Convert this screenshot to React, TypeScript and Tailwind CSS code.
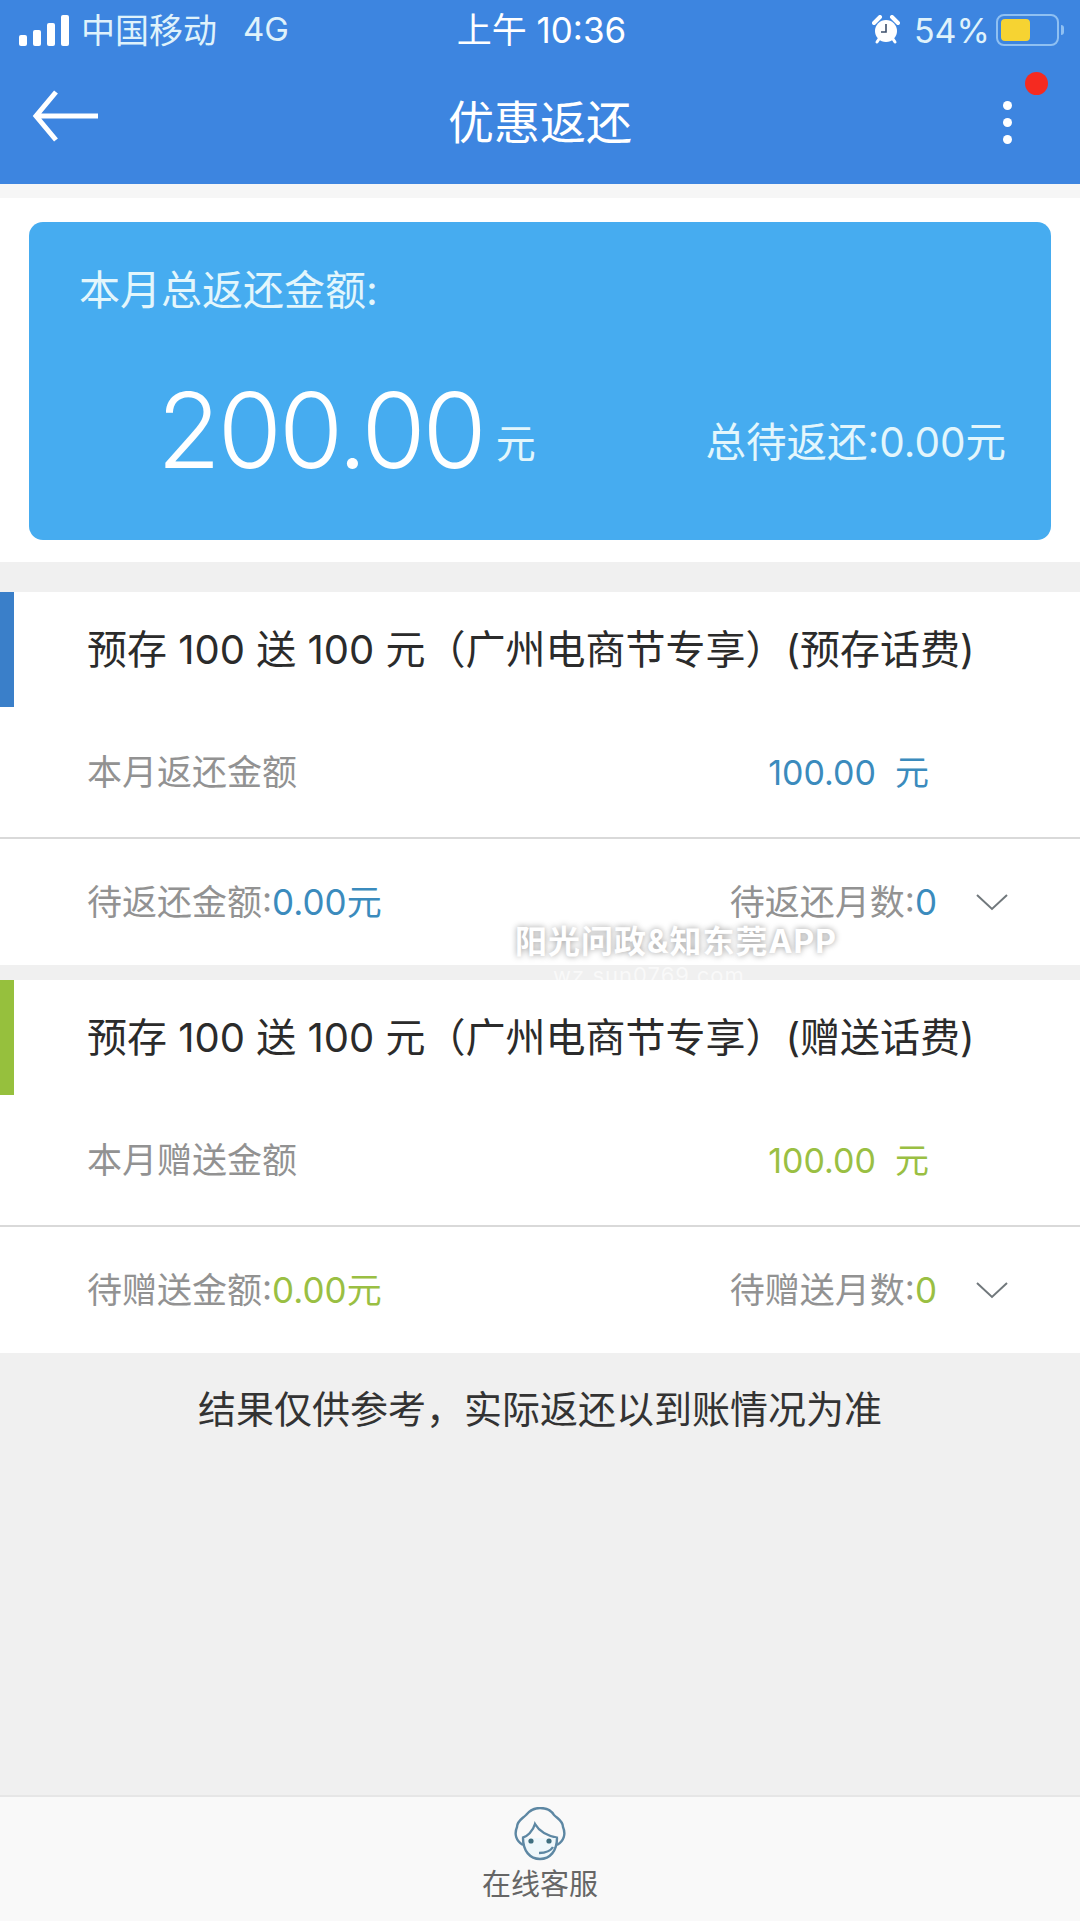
const font = { fontFamily: '"Inter", "Noto Sans CJK SC", sans-serif' };

function Signal() {
  return (
    <div className="flex items-end gap-[6px]">
      <div className="h-[11px] w-[8px] rounded-[2px] bg-white" />
      <div className="h-[16px] w-[8px] rounded-[2px] bg-white" />
      <div className="h-[23px] w-[8px] rounded-[2px] bg-white" />
      <div className="h-[31px] w-[8px] rounded-[2px] bg-white" />
    </div>
  );
}

function Alarm() {
  return (
    <svg width="28" height="30" viewBox="0 0 28 30">
      <circle cx="14" cy="16" r="11" fill="#fff" />
      <path d="M2 8 L8 2 M26 8 L20 2" stroke="#fff" strokeWidth="4" strokeLinecap="round" />
      <path d="M5 27 L7 24 M23 27 L21 24" stroke="#fff" strokeWidth="3" strokeLinecap="round" />
      <path d="M14 9 V17 H9" stroke="#3d4f6b" strokeWidth="1.6" fill="none" />
    </svg>
  );
}

function Battery() {
  return (
    <div className="flex items-center">
      <div className="flex h-[32px] w-[63px] items-center rounded-[8px] border-2 border-[#8fc0f2] p-[3px]">
        <div className="h-[22px] w-[29px] rounded-[4px] bg-[#f6d332]" />
      </div>
      <div className="ml-[2px] h-[10px] w-[3px] rounded-r bg-[#8fc0f2]" />
    </div>
  );
}

function Agent() {
  return (
    <svg width="52" height="54" viewBox="0 0 52 54" fill="none" stroke="#5d87a3" strokeWidth="2.4">
      <path d="M9 38 C2 34 0 27 3 20 C3 14 8 12 12 8 C16 3 21 1 26 1 C31 1 37 3 40 8 C44 12 49 14 49 20 C52 27 50 34 43 38" />
      <path d="M8 31 C13 30 19 24 21 17 C25 24 34 29 44 31" />
      <path d="M9 31 C9 44 16 52 26 52 C36 52 43 44 43 31" fill="#eef7fb" />
      <circle cx="17" cy="34" r="2.6" fill="#3f6f80" stroke="none" />
      <circle cx="35" cy="34" r="2.6" fill="#3f6f80" stroke="none" />
      <path d="M39 40 C36 45 31 46 25 46" />
    </svg>
  );
}

function Chevron() {
  return (
    <svg width="34" height="20" viewBox="0 0 34 20" fill="none" stroke="#71787c" strokeWidth="2">
      <path d="M2 3 L17 17 L32 3" />
    </svg>
  );
}

type Promo = {
  title: string;
  label: string;
  pendingAmount: string;
  pendingMonths: string;
  bar: string;
  accent: string;
};

const promos: Promo[] = [
  {
    title: "预存 100 送 100 元（广州电商节专享）(预存话费)",
    label: "本月返还金额",
    pendingAmount: "待返还金额:",
    pendingMonths: "待返还月数:",
    bar: "bg-[#3a7fc9]",
    accent: "text-[#3b8bbd]",
  },
  {
    title: "预存 100 送 100 元（广州电商节专享）(赠送话费)",
    label: "本月赠送金额",
    pendingAmount: "待赠送金额:",
    pendingMonths: "待赠送月数:",
    bar: "bg-[#96c03d]",
    accent: "text-[#9abf43]",
  },
];

function PromoCard({ p }: { p: Promo }) {
  return (
    <section className="bg-white">
      <div className="flex h-[115px] items-center">
        <div className={`h-full w-[14px] ${p.bar}`} />
        <h2 className="ml-[73px] whitespace-nowrap text-[40px] text-[#2b2b2b]">{p.title}</h2>
      </div>
      <div className="flex h-[132px] items-center justify-between border-b-2 border-[#d9d9d9] pl-[87px] pr-[151px]">
        <span className="text-[35px] text-[#929292]">{p.label}</span>
        <span className={`text-[34px] ${p.accent}`}>100.00&nbsp;&nbsp;元</span>
      </div>
      <div className="flex h-[126px] items-center justify-between pl-[87px] pr-[71px]">
        <span className="text-[35px] text-[#929292]">
          {p.pendingAmount}
          <span className={p.accent}>0.00元</span>
        </span>
        <div className="flex items-center gap-[38px]">
          <span className="text-[35px] text-[#929292]">
            {p.pendingMonths}
            <span className={p.accent}>0</span>
          </span>
          <Chevron />
        </div>
      </div>
    </section>
  );
}

export default function App() {
  return (
    <div style={font} className="relative flex h-[1921px] w-[1080px] flex-col overflow-hidden bg-[#f0f0f0]">
      <header className="h-[184px] bg-[#3d85e0] text-white">
        <div className="flex h-[60px] items-center justify-between pl-[19px] pr-[16px]">
          <div className="flex w-[330px] items-center">
            <Signal />
            <span className="ml-[12px] text-[34px] text-[#dff2fb]">中国移动</span>
            <span className="ml-[26px] text-[33px] text-[#dff2fb]">4G</span>
          </div>
          <span className="text-[35px]">上午 10:36</span>
          <div className="flex w-[330px] items-center justify-end">
            <Alarm />
            <span className="ml-[14px] mr-[6px] text-[34px] text-[#dff2fb]">54%</span>
            <Battery />
          </div>
        </div>
        <div className="relative grid h-[124px] grid-cols-[236px_1fr_200px] items-center pl-[32px] pr-[68px]">
          <svg className="mb-[12px]" width="66" height="52" viewBox="0 0 66 52" fill="none" stroke="#fff" strokeWidth="5">
            <path d="M66 26 H4 M24 2 L4 26 L24 50" />
          </svg>
          <h1 className="text-center text-[46px]">优惠返还</h1>
          <div className="flex flex-col items-end gap-[8px]">
            <div className="h-[9px] w-[9px] rounded-full bg-white" />
            <div className="h-[9px] w-[9px] rounded-full bg-white" />
            <div className="h-[9px] w-[9px] rounded-full bg-white" />
          </div>
          <div className="absolute right-[32px] top-[12px] h-[23px] w-[23px] rounded-full bg-[#f52a20]" />
        </div>
      </header>

      <div className="border-t-[14px] border-[#f6f6f6] bg-white px-[29px] pb-[22px] pt-[24px]">
        <div className="flex h-[318px] flex-col rounded-[14px] bg-[#46acf0] pl-[50px] pr-[45px] text-[#e3f6fc]">
          <div className="mt-[38px] text-[41px]">本月总返还金额:</div>
          <div className="mt-[48px] flex items-end justify-between">
            <div className="ml-[78px] flex items-end">
              <span className="text-[104px] font-light leading-[120px] tracking-[-3px] text-white">200.00</span>
              <span className="mb-[16px] ml-[12px] text-[40px]">元</span>
            </div>
            <span className="mb-[16px] text-[40.5px]">总待返还:0.00元</span>
          </div>
        </div>
      </div>

      <div className="mt-[30px] flex flex-col gap-[15px]">
        {promos.map((p) => (
          <PromoCard key={p.label} p={p} />
        ))}
      </div>

      <p className="mt-[28px] text-center text-[38px] text-[#333333]">结果仅供参考，实际返还以到账情况为准</p>

      <footer className="mt-auto flex h-[126px] flex-col items-center border-t-2 border-[#e6e6e6] bg-[#f9f9f9] pt-[10px]">
        <Agent />
        <span className="mt-[2px] text-[29px] text-[#666666]">在线客服</span>
      </footer>

      <div className="absolute left-[515px] top-[924px] text-[32px] font-bold leading-[36px] tracking-[1px] text-white [text-shadow:0_0_6px_#9a9a9a]">
        阳光问政&amp;知东莞APP
      </div>
      <div className="absolute left-[553px] top-[965px] text-[22px] leading-[20px] tracking-[1px] text-white opacity-60">
        wz.sun0769.com
      </div>
    </div>
  );
}
